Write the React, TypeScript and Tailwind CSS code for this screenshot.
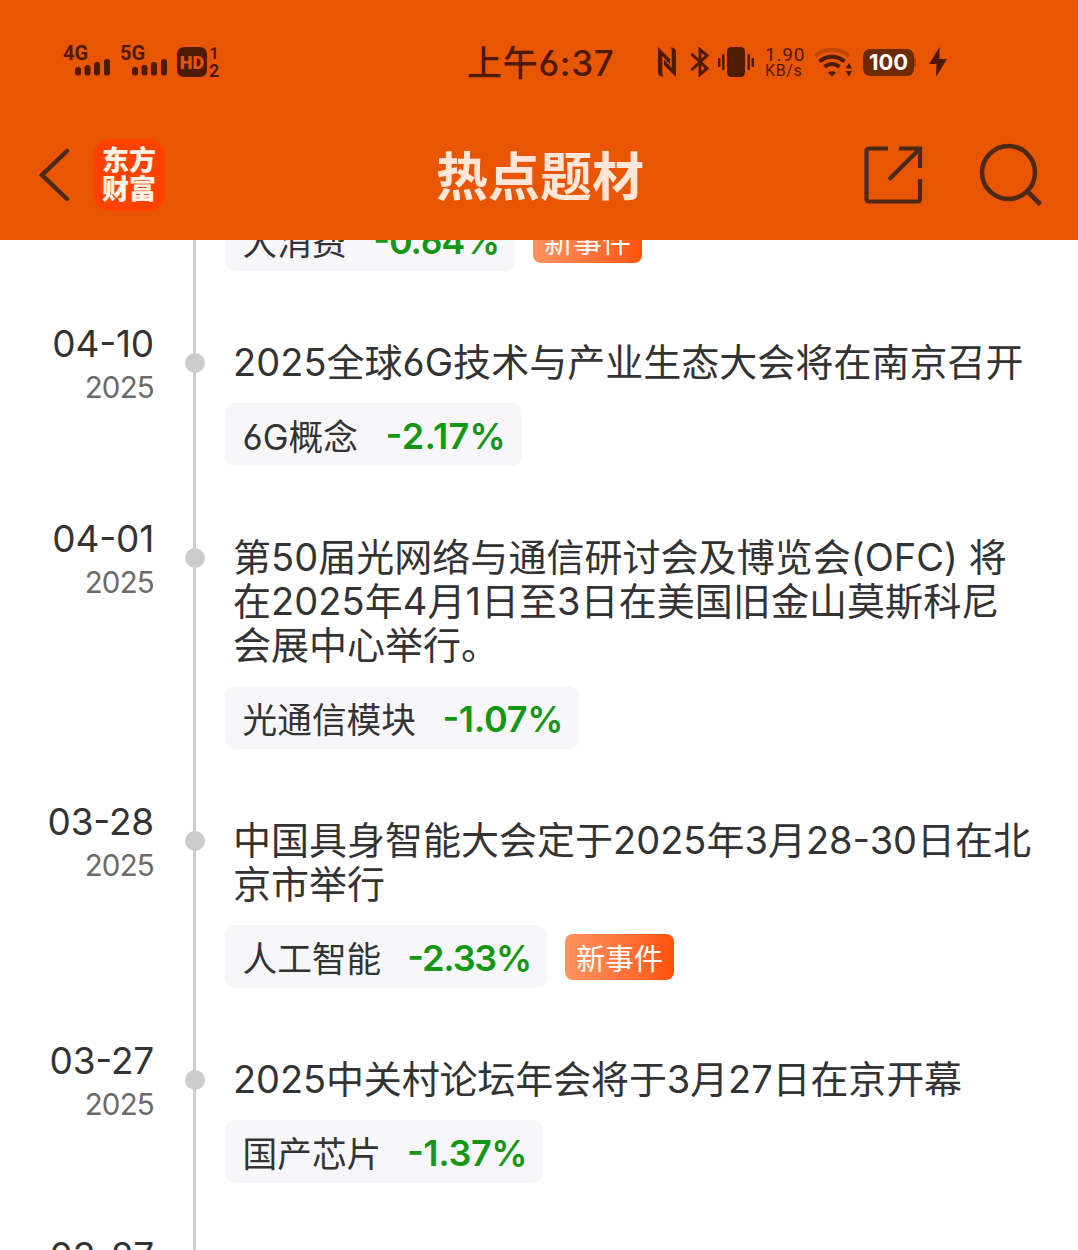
import type { ReactNode } from "react";

type Topic = {
  name: string;
  change: string;
  width: string;
  tracking: string;
  isNew?: boolean;
};

type HotEvent = {
  date: string;
  year: string;
  lines: { text: string; tracking: string }[];
  topic: Topic;
};

const firstTopic: Topic = {
  name: "大消费",
  change: "-0.64%",
  width: "w-[290px]",
  tracking: "tracking-[-1.2px]",
  isNew: true,
};

const events: HotEvent[] = [
  {
    date: "04-10",
    year: "2025",
    lines: [{ text: "2025全球6G技术与产业生态大会将在南京召开", tracking: "tracking-[0.03px]" }],
    topic: { name: "6G概念", change: "-2.17%", width: "w-[297px]", tracking: "tracking-[0.3px]" },
  },
  {
    date: "04-01",
    year: "2025",
    lines: [
      { text: "第50届光网络与通信研讨会及博览会(OFC) 将", tracking: "tracking-[0.04px]" },
      { text: "在2025年4月1日至3日在美国旧金山莫斯科尼", tracking: "tracking-[0.06px]" },
      { text: "会展中心举行。", tracking: "tracking-[0px]" },
    ],
    topic: { name: "光通信模块", change: "-1.07%", width: "w-[354px]", tracking: "tracking-[-0.3px]" },
  },
  {
    date: "03-28",
    year: "2025",
    lines: [
      { text: "中国具身智能大会定于2025年3月28-30日在北", tracking: "tracking-[0px]" },
      { text: "京市举行", tracking: "tracking-[0px]" },
    ],
    topic: {
      name: "人工智能",
      change: "-2.33%",
      width: "w-[322px]",
      tracking: "tracking-[-1.2px]",
      isNew: true,
    },
  },
  {
    date: "03-27",
    year: "2025",
    lines: [{ text: "2025中关村论坛年会将于3月27日在京开幕", tracking: "tracking-[-0.12px]" }],
    topic: { name: "国产芯片", change: "-1.37%", width: "w-[318px]", tracking: "tracking-[-0.4px]" },
  },
];

function Signal({ label }: { label: string }) {
  return (
    <div className="relative h-9 w-[57px]">
      <span className="absolute -top-px left-0 font-['Roboto'] text-[20px] leading-[20px] font-bold">{label}</span>
      <svg className="absolute top-[15px] left-3" width="36" height="17" fill="currentColor">
        <rect x="0" y="8" width="6" height="8.500" rx="2.500" />
        <rect x="9.500" y="6" width="6" height="10.500" rx="2.500" />
        <rect x="19" y="3" width="6" height="13.500" rx="2.500" />
        <rect x="29" y="0" width="6" height="16.500" rx="2.500" />
      </svg>
    </div>
  );
}

function StatusBar() {
  return (
    <div className="flex h-[124px] items-center text-[#4f1a02]">
      <div className="flex w-[467px] items-center pl-[63px]">
        <Signal label="4G" />
        <Signal label="5G" />
        <div className="flex h-[30px] w-[30px] items-center justify-center rounded-[7px] bg-[#4f1a02]">
          <span className="font-['Roboto'] text-[18px] font-black text-[#e95603]">HD</span>
        </div>
        <div className="flex flex-col items-center pl-0.5 font-['Roboto'] leading-[17px] font-bold">
          <span className="text-[16px]">1</span>
          <span className="text-[18px]">2</span>
        </div>
      </div>
      <div className="w-[189px] pt-0.5 text-[35px] font-medium tracking-[0.7px] whitespace-nowrap">上午6:37</div>

      <svg className="ml-0.5" width="18" height="30" viewBox="0 0 18 30" fill="currentColor">
        <path d="M0 0L12 12V17.500L4.300 9V25.500Q4.300 28.500 5.500 29.500Q0 29.500 0 25Z" />
        <path d="M18 30L6 18V12.500L13.700 21V4.500Q13.700 1.500 12.500 .5Q18 .5 18 5Z" />
      </svg>
      <svg className="ml-3.5" width="20" height="30" viewBox="0 0 20 30" fill="none" stroke="currentColor" strokeWidth="3">
        <path d="M1.500 7L17 21.500L10 27.500V2.500L17 8.500L1.500 23" />
      </svg>
      <svg className="ml-2" width="36" height="30" viewBox="0 0 36 30" fill="currentColor">
        <rect x="9" y="0" width="18" height="30" rx="4.500" />
        <rect x="0" y="11" width="2.500" height="9" rx="1" />
        <rect x="4" y="7" width="2.500" height="16" rx="1" />
        <rect x="29.500" y="7" width="2.500" height="16" rx="1" />
        <rect x="33.500" y="11" width="2.500" height="9" rx="1" />
      </svg>
      <div className="ml-[11px] w-[49px] font-['Roboto'] whitespace-nowrap">
        <div className="text-[19px] leading-[17px] tracking-[0.8px]">1.90</div>
        <div className="text-[16px] leading-[16px] tracking-[0.6px]">KB/s</div>
      </div>
      <svg width="38" height="30" viewBox="0 0 38 30" fill="none" stroke="currentColor" strokeWidth="4">
        <path d="M1 9C11 .5 25 .5 35 9" strokeOpacity="0.25" />
        <path d="M5.500 14.500C13 8 23 8 30.500 14.500" />
        <path d="M10.500 20C15 16 21 16 25.500 20" />
        <path d="M14 25.500L18 29.500L22 25.500C19.500 23.800 16.500 23.800 14 25.500Z" fill="currentColor" stroke="none" />
        <path d="M31.500 21.500L35 16L38 21.500ZM31.500 24L35 29.500L38 24Z" fill="currentColor" stroke="none" />
      </svg>
      <div className="ml-[11px] flex h-[27px] w-[51px] items-center justify-center rounded-[7px] bg-[#6d2b05] pt-px text-[22px] font-bold text-white">
        100
      </div>
      <div className="h-[9px] w-[2px] rounded-r bg-[#a03b04]" />
      <svg className="ml-[13px]" width="18" height="30" viewBox="0 0 18 30" fill="currentColor">
        <path d="M10.500 0L0 17H7.500L7 30L18 12H10.500Z" />
      </svg>
    </div>
  );
}

function NavBar() {
  return (
    <div className="flex h-[101px] items-center pl-[39px] text-[#4d2a18]">
      <svg width="32" height="54" viewBox="0 0 32 54" fill="none" stroke="currentColor" strokeWidth="4.500" strokeLinecap="round">
        <path d="M28 3L3 27L28 51" />
      </svg>
      <div className="ml-[22px] flex h-[72px] w-[72px] flex-col items-center justify-center rounded-[17px] bg-[#ff4200] text-[27px] leading-[29px] font-black text-[#fff3e8]">
        <span>东方</span>
        <span>财富</span>
      </div>
      <h1 className="ml-[271px] w-[428px] pt-1.5 text-[52px] font-bold text-[#ffe6d8]">热点题材</h1>
      <svg width="59" height="58" viewBox="0 0 59 58" fill="none" stroke="currentColor" strokeWidth="4.200">
        <path d="M24 2.500H5Q2.500 2.500 2.500 5V53Q2.500 55.500 5 55.500H53.500Q56 55.500 56 53V33" />
        <path d="M35 2.500H56V22M56 2.500L25 33.500" />
      </svg>
      <svg className="ml-14" width="64" height="64" viewBox="0 0 64 64" fill="none" stroke="currentColor" strokeWidth="4.600">
        <circle cx="29.500" cy="29.500" r="26.500" />
        <path d="M48 48L61.500 61.500" />
      </svg>
    </div>
  );
}

function TopicRow({ topic }: { topic: Topic }) {
  return (
    <div className="flex items-center gap-[18px]">
      <div
        className={`flex h-[63px] items-center justify-between rounded-[10px] bg-[#f7f7fa] pr-4 pl-[17.5px] whitespace-nowrap ${topic.width}`}
      >
        <span className="pt-[5px] text-[34.7px] text-[#333]">{topic.name}</span>
        <span
          className={`pt-0.5 text-[36px] font-semibold text-[#149714] [font-feature-settings:'cv03','cv04','case'] ${topic.tracking}`}
        >
          {topic.change}
        </span>
      </div>
      {topic.isNew && (
        <span className="flex h-[46px] w-[109px] items-center justify-center rounded-lg bg-linear-to-r from-[#ff935f] to-[#ff5200] pt-[7px] text-[29px] text-white">
          新事件
        </span>
      )}
    </div>
  );
}

function TimelineItem({ date, year, children }: { date?: string; year?: string; children?: ReactNode }) {
  return (
    <div className="flex">
      <div className="w-[154px] shrink-0 text-right">
        <div className="text-[37px] leading-[42px] tracking-[-0.2px] text-[#333] [font-feature-settings:'cv03','cv04','case']">
          {date}
        </div>
        <div className="text-[29.5px] leading-[44px] tracking-[-0.8px] text-[#6b6b6b]">{year}</div>
      </div>
      <div className="relative ml-[31px] w-5 shrink-0 pl-2">
        <div className="h-full w-[3px] bg-[#ccc]" />
        {date && <div className="absolute top-[30px] left-0 size-5 rounded-full bg-[#ccc]" />}
      </div>
      <div className="ml-5 pb-[52px]">{children}</div>
    </div>
  );
}

export default function App() {
  return (
    <div className="flex h-[1250px] w-[1078px] flex-col overflow-hidden bg-white font-['Inter','Noto_Sans_CJK_SC',sans-serif] [font-feature-settings:'cv03','cv04']">
      <header className="h-60 shrink-0 bg-[#e95603]">
        <StatusBar />
        <NavBar />
      </header>

      <main className="min-h-0 flex-1 overflow-hidden">
        <div className="-mt-8">
          <TimelineItem>
            <TopicRow topic={firstTopic} />
          </TimelineItem>

          {events.map((event) => (
            <TimelineItem key={event.topic.name} date={event.date} year={event.year}>
              <div className="pt-[17px] pb-[19px] pl-2 text-[38px] leading-[44px] whitespace-nowrap text-[#333]">
                {event.lines.map((line) => (
                  <div key={line.text} className={line.tracking}>
                    {line.text}
                  </div>
                ))}
              </div>
              <TopicRow topic={event.topic} />
            </TimelineItem>
          ))}

          <TimelineItem date="03-27" year="2025" />
        </div>
      </main>
    </div>
  );
}
